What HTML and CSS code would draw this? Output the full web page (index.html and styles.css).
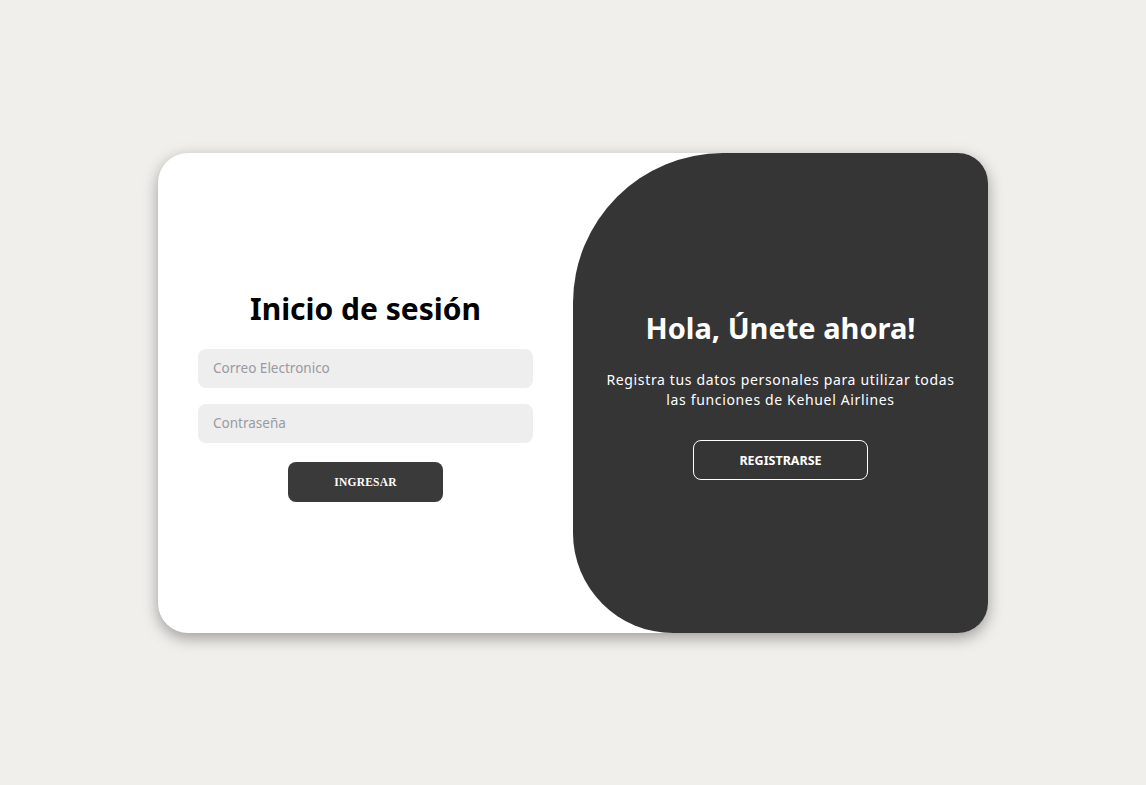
FILE: index.html
```html
<!DOCTYPE html>
<html lang="es">
<head>
<meta charset="utf-8">
<title>Kehuel Airlines - Inicio de sesión</title>
<link rel="stylesheet" href="styles.css">
</head>
<body>
<div class="page">
  <div class="card">
    <form class="login">
      <h1 class="title">Inicio de sesión</h1>
      <input class="field" type="email" placeholder="Correo Electronico">
      <input class="field" type="password" placeholder="Contraseña">
      <button class="btn btn-dark" type="button">Ingresar</button>
    </form>
    <div class="toggle">
      <h1 class="title light">Hola, Únete ahora!</h1>
      <p class="lead">Registra tus datos personales para utilizar todas las funciones de Kehuel Airlines</p>
      <button class="btn btn-ghost" type="button">Registrarse</button>
    </div>
  </div>
</div>
</body>
</html>
```
FILE: styles.css
```css
* { box-sizing: border-box; }
html, body { margin: 0; padding: 0; }
body {
  background: #f0efeb;
  font-family: "Noto Sans", "Open Sans", sans-serif;
  height: 785px;
}
.page {
  height: 100%;
  display: flex;
  align-items: center;
  justify-content: center;
  padding-top: 1px;
}
.card {
  width: 830px;
  height: 480px;
  background: #fff;
  border-radius: 30px;
  box-shadow: 0 5px 15px rgba(0,0,0,0.35);
  display: flex;
  overflow: hidden;
}
.login {
  width: 50%;
  display: flex;
  flex-direction: column;
  align-items: center;
  justify-content: center;
  padding: 6px 40px 0;
  margin: 0;
}
.title {
  margin: 0 0 14px;
  font-size: 30px;
  font-weight: 700;
  color: #000;
  line-height: 36px;
}
.title.light { color: #fff; margin: 0; font-size: 29px; }
.field {
  width: 100%;
  height: 39px;
  margin: 8px 0;
  border: none;
  border-radius: 8px;
  background: #eee;
  padding: 10px 15px;
  font-family: inherit;
  font-size: 13.5px;
  outline: none;
}
.field::placeholder { color: #9a9aa0; }
.btn {
  font-size: 12px;
  font-weight: 700;
  text-transform: uppercase;
  color: #fff;
  border-radius: 8px;
  height: 40px;
  cursor: pointer;
  padding: 0;
}
.btn-dark {
  font-family: "Liberation Serif", "DejaVu Serif", serif;
  font-size: 11.5px;
  letter-spacing: 0.2px;
  background: #3a3a3a;
  border: 1px solid transparent;
  width: 155px;
  margin-top: 11px;
}
.btn-ghost {
  font-family: "Noto Sans", "Open Sans", sans-serif;
  font-size: 12.5px;
  letter-spacing: 0;
  background: transparent;
  border: 1px solid #fff;
  width: 175px;
}
.toggle {
  width: 50%;
  background: #353535;
  border-radius: 150px 0 0 100px;
  color: #fff;
  display: flex;
  flex-direction: column;
  align-items: center;
  justify-content: center;
  text-align: center;
  padding: 4px 30px 0;
}
.lead {
  font-size: 14px;
  line-height: 20px;
  letter-spacing: 0.65px;
  margin: 24px 0 30px;
}
```
